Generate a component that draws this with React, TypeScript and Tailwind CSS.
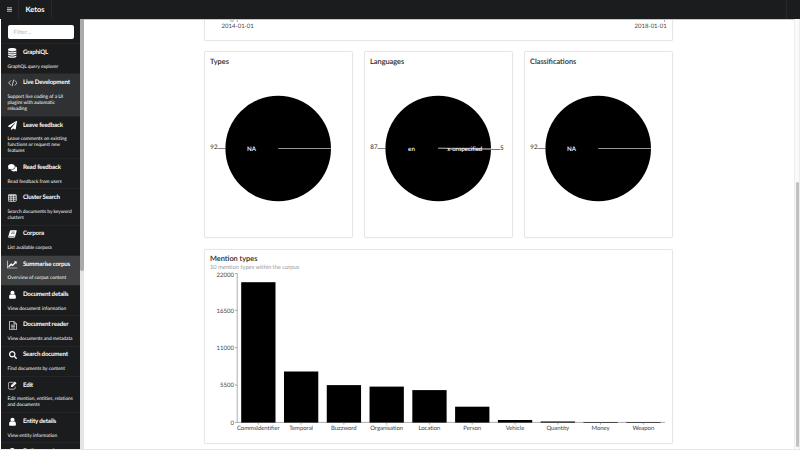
import type { ReactNode } from 'react';
import { FaComments, FaPaperPlane, FaSearch } from 'react-icons/fa';

const DatabaseIcon = () => (
  <svg viewBox="0 0 24 28" className="h-[9.800px] w-[8.400px]" fill="currentColor">
    <path d="M12 12c4.500 0 9.300-.8 12-2.700V12c0 2.200-5.400 4-12 4S0 14.200 0 12V9.300C2.700 11.200 7.500 12 12 12zM12 24c4.500 0 9.300-.8 12-2.700V24c0 2.200-5.400 4-12 4S0 26.200 0 24v-2.700C2.700 23.200 7.500 24 12 24zM12 18c4.500 0 9.300-.8 12-2.700V18c0 2.200-5.400 4-12 4S0 20.200 0 18v-2.700C2.700 17.200 7.500 18 12 18zM12 0c6.600 0 12 1.800 12 4v2c0 2.200-5.400 4-12 4S0 8.200 0 6V4c0-2.200 5.400-4 12-4z" />
  </svg>
);

const CodeIcon = () => (
  <svg viewBox="0 0 30 24" className="h-[7.800px] w-[9.800px]" fill="none" stroke="currentColor" strokeWidth="2.200">
    <path d="M9 4.500L1.800 12 9 19.500M21 4.500l7.200 7.500-7.200 7.500M17.500 2l-5 20" />
  </svg>
);

const BookIcon = () => (
  <svg viewBox="0 0 26 24" className="h-[8.200px] w-[9px]">
    <path d="M8.500 1H24q1.800.3 1.200 2.200L20.500 20q-.8 3-3.500 3H3.500Q0 22.500.6 19L5.200 4Q6 1.200 8.500 1z" fill="currentColor" />
    <path d="M9.800 6h10M8.600 10h10M2.800 19.500h14l1-3" fill="none" stroke="#1b1c1d" strokeWidth="1.500" />
  </svg>
);

const LineChartIcon = () => (
  <svg viewBox="0 0 2048 1792" className="h-[9px] w-[10.3px]" fill="currentColor">
    <path d="M2048 1536v128H0V128h128v1408h1920zM1920 288v435q0 21-19.500 29.500T1865 745l-121-121-633 633q-10 10-23 10t-23-10L832 1024l-416 416-192-192 585-585q10-10 23-10t23 10l233 233 464-464-121-121q-16-16-7.500-35.500T1453 256h435q14 0 23 9t9 23z" />
  </svg>
);

const UserIcon = () => (
  <svg viewBox="0 0 1280 1792" className="h-[9.500px] w-[7px]" fill="currentColor">
    <path d="M1280 1399q0 109-62.500 187t-150.500 78H213q-88 0-150.500-78T0 1399q0-85 8.500-160.500t31.500-152 58.500-131 94-89T327 832q131 128 313 128t313-128q76 0 134.500 34.500t94 89 58.500 131 31.500 152 8.500 160.500zM1024 512q0 159-112.500 271.500T640 896 368.500 783.500 256 512t112.500-271.500T640 128t271.500 112.500T1024 512z" />
  </svg>
);

const TableIcon = () => (
  <svg viewBox="0 0 26 24" className="h-[8px] w-[8.600px]" fill="none" stroke="currentColor" strokeWidth="2.200">
    <rect x="1" y="2" width="24" height="20" rx="2" />
    <path d="M1 4h24M1 9.500h24M1 15.500h24M9 3v19M17 3v19" />
  </svg>
);

const FileIcon = () => (
  <svg viewBox="0 0 24 28" className="h-[9px] w-[8px]" fill="none" stroke="currentColor" strokeWidth="2.200" strokeLinejoin="round">
    <path d="M1 1h14l8 8v18H1zM15 1v8h8M6 13h12M6 17.500h12M6 22h12" />
  </svg>
);

const EditIcon = () => (
  <svg viewBox="0 0 28 26" className="h-[8.500px] w-[9.200px]" fill="none" stroke="currentColor" strokeWidth="2">
    <path d="M17 4H5.500A4.500 4.500 0 0 0 1 8.500v12A4.500 4.500 0 0 0 5.500 25h12a4.500 4.500 0 0 0 4.500-4.500V17" />
    <path d="M9 18v-5L21 1.500l5 5L14 18z" fill="currentColor" stroke="none" />
    <path d="M12 13.500l8-8" stroke="#1b1c1d" strokeWidth="1" />
  </svg>
);

type Item = { title: string; lines: string[]; icon: ReactNode; tone?: string };

const items: Item[] = [
  { title: 'GraphiQL', lines: ['GraphQL query explorer'], icon: <DatabaseIcon /> },
  { title: 'Live Development', lines: ['Support live coding of a UI', 'plugins with automatic', 'reloading'], icon: <CodeIcon />, tone: 'bg-[#303132]' },
  { title: 'Leave feedback', lines: ['Leave comments on existing', 'functions or request new', 'features'], icon: <FaPaperPlane size={9} /> },
  { title: 'Read feedback', lines: ['Read feedback from users'], icon: <FaComments size={9.5} /> },
  { title: 'Cluster Search', lines: ['Search documents by keyword', 'clusters'], icon: <TableIcon /> },
  { title: 'Corpora', lines: ['List available corpora'], icon: <BookIcon /> },
  { title: 'Summarise corpus', lines: ['Overview of corpus content'], icon: <LineChartIcon />, tone: 'bg-[#3f4041]' },
  { title: 'Document details', lines: ['View document information'], icon: <UserIcon /> },
  { title: 'Document reader', lines: ['View documents and metadata'], icon: <FileIcon /> },
  { title: 'Search document', lines: ['Find documents by content'], icon: <FaSearch size={8} /> },
  { title: 'Edit', lines: ['Edit mention, entities, relations', 'and documents'], icon: <EditIcon /> },
  { title: 'Entity details', lines: ['View entity information'], icon: <UserIcon /> },
  { title: 'Entity search', lines: [], icon: <FaSearch size={8} /> },
];

function SidebarItem({ title, lines, icon, tone }: Item) {
  return (
    <div className={`shrink-0 border-b border-[#242526] pt-[4.700px] pb-[3.700px] pl-[6px] text-white ${tone ?? ''}`}>
      <div className="flex h-[8px] items-center">
        <span className="flex w-[11px] items-center justify-center">{icon}</span>
        <span className="ml-[4.900px] pt-[0.400px] text-[6.200px] leading-[8px] font-bold tracking-[-0.19px] whitespace-nowrap">{title}</span>
      </div>
      <div className="mt-[6.900px] pl-[0.500px]">
        {lines.map((l) => (
          <div key={l} className="text-[4.800px] leading-[6px] whitespace-nowrap">{l}</div>
        ))}
      </div>
    </div>
  );
}

function PieCard({ title, value, label, children }: { title: string; value: string; label: string; children?: ReactNode }) {
  return (
    <section className="h-[187px] w-[149px] rounded-[2px] border border-[#e6e6e6] shadow-[0_0_1px_#e5e5e5]">
      <h2 className="h-[18px] pt-[4.500px] pl-[5px] text-[7.400px] leading-[10px] font-medium text-[#262626] [-webkit-text-stroke:0.08px_#262626]">{title}</h2>
      <svg viewBox="0 0 147 167" className="h-[167px] w-[147px] overflow-visible">
        <circle cx="73.200" cy="78.500" r="52.800" />
        <path d="M12.500 78.500h8" stroke="#555" strokeWidth=".7" />
        <text x="5.300" y="78.900" fontSize="6.200" fill="#222">{value}</text>
        <text x="46.500" y="81" fontSize="6.200" fontWeight="600" fill="#fff" textAnchor="middle">{label}</text>
        {children ?? <path d="M73.200 78.500H126" stroke="#bbb" strokeWidth=".8" />}
      </svg>
    </section>
  );
}

const bars = [
  { name: 'CommsIdentifier', top: 282.2 },
  { name: 'Temporal', top: 371.5 },
  { name: 'Buzzword', top: 385.1 },
  { name: 'Organisation', top: 386.6 },
  { name: 'Location', top: 390.1 },
  { name: 'Person', top: 406.7 },
  { name: 'Vehicle', top: 420 },
  { name: 'Quantity', top: 421.5 },
  { name: 'Money', top: 422 },
  { name: 'Weapon', top: 422 },
];

const ticks = [
  { label: '22000', y: 273.5, textY: 277 },
  { label: '16500', y: 310.4, textY: 312.7 },
  { label: '11000', y: 347.7, textY: 350 },
  { label: '5500', y: 385, textY: 387.3 },
  { label: '0', y: 422.4, textY: 424.7 },
];

function BarChart() {
  return (
    <svg viewBox="205 272 467 170" className="h-[170px] w-[467px] overflow-visible">
      <path d="M237.200 273.200V422.400H665" fill="none" stroke="#777" strokeWidth=".6" />
      {ticks.map((t) => (
        <g key={t.label}>
          <path d={`M235 ${t.y}h2.200`} stroke="#777" strokeWidth=".6" />
          <text x="234" y={t.textY} fontSize="6" fill="#444" textAnchor="end">{t.label}</text>
        </g>
      ))}
      {bars.map((b, i) => {
        const x = 241.2 + i * 42.78;
        return (
          <g key={b.name}>
            <rect x={x} y={b.top} width="34.300" height={422.6 - b.top} />
            <path d={`M${x + 17.1} 422.400v2.200`} stroke="#777" strokeWidth=".6" />
            <text x={x + 17.1} y="430.200" fontSize="6" letterSpacing="-.06" fill="#444" textAnchor="middle">{b.name}</text>
          </g>
        );
      })}
    </svg>
  );
}

export default function App() {
  return (
    <div className="flex h-[450px] w-[800px] flex-col overflow-hidden bg-white [font-family:Lato,sans-serif] [text-rendering:geometricPrecision]">
      <header className="flex h-[19px] shrink-0 items-stretch bg-[#1b1c1d] text-white">
        <div className="flex w-[19px] items-center justify-center border-r border-[#28292a]">
          <svg viewBox="0 0 6 6" className="h-[5px] w-[5px]" stroke="#ddd" strokeWidth="1">
            <path d="M0 1h6M0 3h6M0 5h6" />
          </svg>
        </div>
        <div className="flex w-[33px] items-center border-r border-[#28292a] pl-[6.500px] text-[7.400px] font-bold">Ketos</div>
        <div className="ml-auto mr-[1px] w-[13px] border-l border-[#28292a]" />
      </header>
      <div className="flex h-[430px] shrink-0">
        <aside className="ml-[1px] flex w-[79px] shrink-0 flex-col overflow-hidden bg-[#1b1c1d]">
          <div className="h-[25.200px] shrink-0 border-b border-[#242526] pt-[6px] pl-[6.500px]">
            <div className="flex h-[13.500px] w-[66px] items-center rounded-[2px] bg-white pt-[0.700px] pl-[6px] text-[6px] text-[#b8b8b8]">Filter...</div>
          </div>
          {items.map((item) => <SidebarItem key={item.title} {...item} />)}
        </aside>
        <div className="w-[4px] shrink-0 bg-[#e4e4e4]">
          <div className="h-[252px] rounded-b-[2px] bg-[#aaaaaa]" />
        </div>
        <main className="min-w-0 flex-1 overflow-hidden border-t border-[#c8c8c8] pl-[120px]">
          <section className="h-[21px] w-[469px] rounded-b-[2px] border border-t-0 border-[#e6e6e6] shadow-[0_0_1px_#e5e5e5]">
            <svg viewBox="205 20 467 20" className="h-[20px] w-[467px]">
              <path d="M230.500 20a1.500 1.500 0 0 0 3 0M237.300 20v2M664.500 20v2" fill="none" stroke="#888" strokeWidth=".7" />
              <text x="221.500" y="27.500" fontSize="6" fill="#444">2014-01-01</text>
              <text x="666.800" y="27.500" fontSize="6" fill="#444" textAnchor="end">2018-01-01</text>
            </svg>
          </section>
          <div className="mt-[10.400px] flex gap-[11px]">
            <PieCard title="Types" value="92" label="NA" />
            <PieCard title="Languages" value="87" label="en">
              <path d="M73.200 78.100L126 78.500M73.200 78.300L126 79.500H135" fill="none" stroke="#aaa" strokeWidth=".7" />
              <path d="M126 79.500h9" stroke="#555" strokeWidth=".7" />
              <text x="99.700" y="81.300" fontSize="6.100" letterSpacing="-.1" fontWeight="600" fill="#fff" textAnchor="middle">x-unspecified</text>
              <text x="135" y="80.300" fontSize="6.200" fill="#222">5</text>
            </PieCard>
            <PieCard title="Classifications" value="92" label="NA" />
          </div>
          <section className="mt-[10.600px] h-[195px] w-[469px] rounded-[2px] border border-[#e6e6e6] shadow-[0_0_1px_#e5e5e5]">
            <h2 className="pt-[4px] pl-[5px] text-[7.400px] leading-[10px] font-medium text-[#262626] [-webkit-text-stroke:0.08px_#262626]">Mention types</h2>
            <p className="h-[8px] pt-[0.200px] pl-[5px] text-[5.800px] leading-[8px] tracking-[-0.03px] text-[#999999]">10 mention types within the corpus</p>
            <BarChart />
          </section>
        </main>
        <div className="flex w-[6px] shrink-0 flex-col items-center border-x border-[#ececec] bg-[#fafafa] pt-[163px]">
          <div className="h-[265px] w-[3px] rounded-full bg-[#c1c1c1]" />
        </div>
      </div>
      <div className="h-[1px] shrink-0 bg-[#e8e8e8]" />
    </div>
  );
}
